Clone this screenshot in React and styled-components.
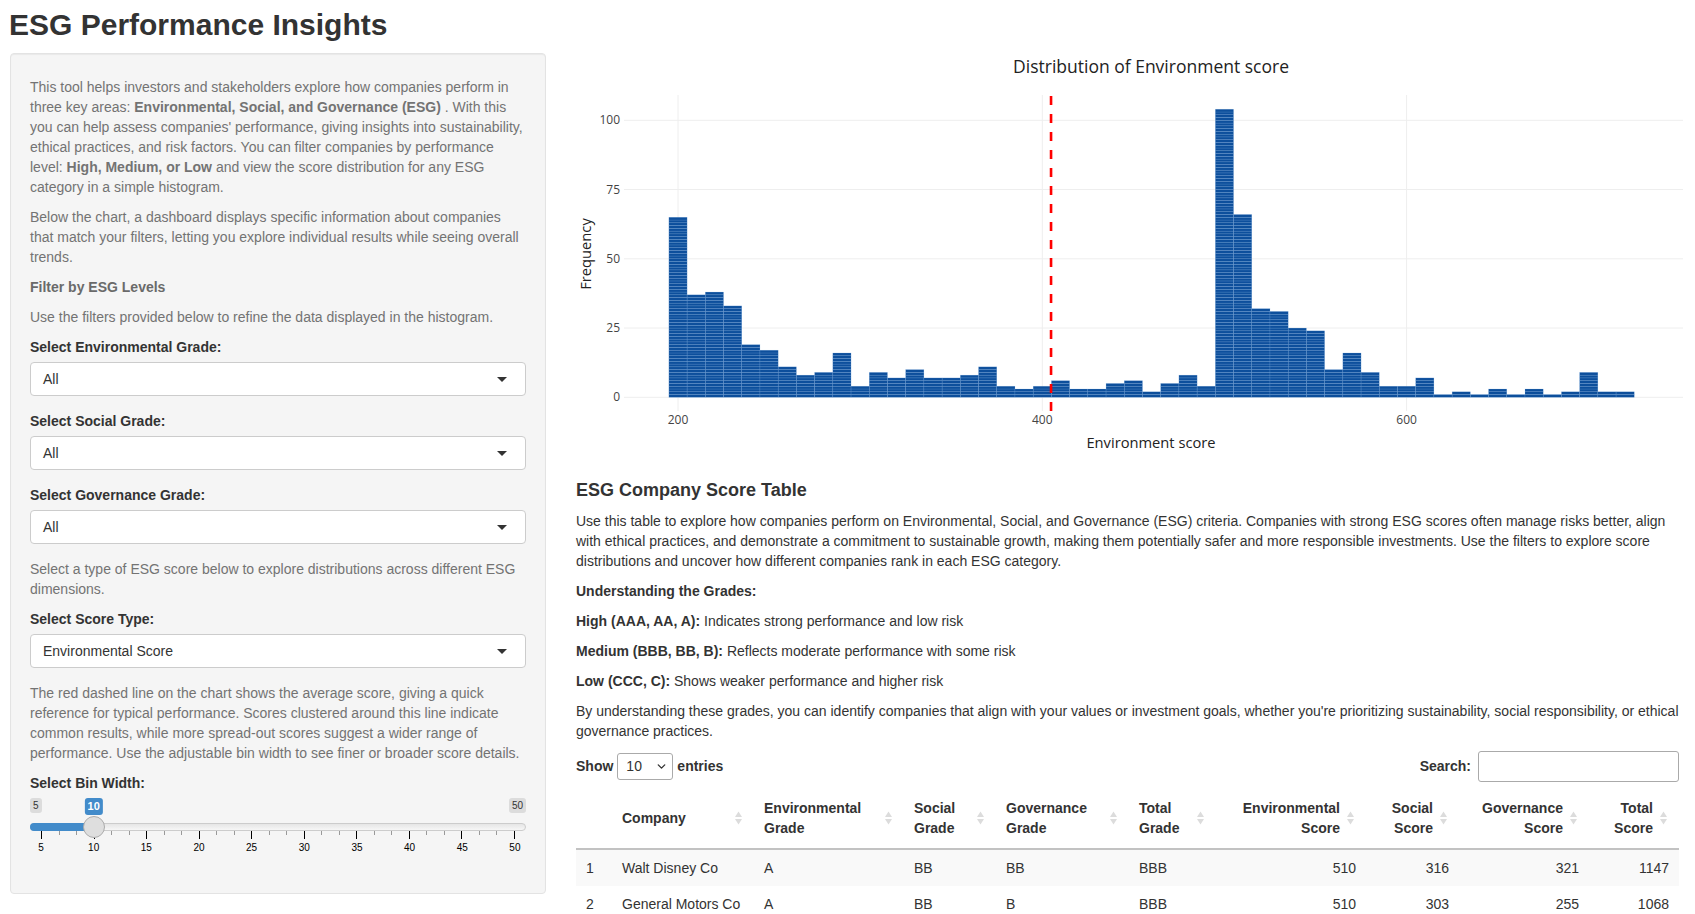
import React from 'react'
import styled, { createGlobalStyle } from 'styled-components'
import { ChevronDown } from 'lucide-react'

const GlobalStyle = createGlobalStyle`
  * { box-sizing: border-box; }
  html, body { margin: 0; background: #fff; overflow: hidden; }
  body {
    font-family: "Liberation Sans", Arial, Helvetica, sans-serif;
    font-size: 14px;
    line-height: 20px;
    color: #333;
  }
`

// histogram counts, bins of width 10 starting at 195
const counts = [65, 37, 38, 33, 19, 17, 11, 8, 9, 16, 4, 9, 7, 10, 7, 7, 8, 11, 4, 3, 4, 6, 3, 3, 5, 6, 2, 5, 8, 4,
  104, 66, 32, 31, 25, 24, 10, 16, 9, 4, 4, 7, 1, 2, 1, 3, 1, 3, 1, 2, 9, 2, 2]
const BIN_START = 195
const BIN_W = 10
const AVG = 404.8

const X0 = 102
const XS = 1.8215
const Y0 = 344.3
const YS = 2.77
const xPos = v => X0 + (v - 200) * XS
const yPos = c => Y0 - c * YS

const rows = [
  [1, 'Walt Disney Co', 'A', 'BB', 'BB', 'BBB', 510, 316, 321, 1147],
  [2, 'General Motors Co', 'A', 'BB', 'B', 'BBB', 510, 303, 255, 1068],
]

const columns = [
  { label: '', w: 36 },
  { label: 'Company', w: 142 },
  { label: ['Environmental', 'Grade'], w: 150 },
  { label: ['Social', 'Grade'], w: 92 },
  { label: ['Governance', 'Grade'], w: 133 },
  { label: ['Total', 'Grade'], w: 87 },
  { label: ['Environmental', 'Score'], w: 150, num: true },
  { label: ['Social', 'Score'], w: 93, num: true },
  { label: ['Governance', 'Score'], w: 130, num: true },
  { label: ['Total', 'Score'], w: 90, num: true },
]

const Page = styled.div`
  padding-top: 8px;
`

const Title = styled.h2`
  margin: 0 0 12px 9px;
  font-size: 30px;
  line-height: 33px;
  font-weight: bold;
  color: #333;
`

const Layout = styled.div`
  display: grid;
  grid-template-columns: 536px 1103px;
  column-gap: 30px;
  padding-left: 10px;
  align-items: start;
`

const Well = styled.div`
  background: #f5f5f5;
  border: 1px solid #e3e3e3;
  border-radius: 4px;
  box-shadow: inset 0 1px 1px rgba(0, 0, 0, 0.05);
  padding: 23px 19px 19px;
`

const Muted = styled.p`
  margin: 0 0 10px;
  color: #737373;
  strong { font-weight: bold; }
`

const SubHead = styled(Muted)`
  font-weight: bold;
  color: #6a6a6a;
`

const FormGroup = styled.div`
  margin-bottom: 15px;
`

const Label = styled.label`
  display: block;
  font-weight: bold;
  margin-bottom: 5px;
  color: #333;
`

const SelectBox = styled.div`
  height: 34px;
  background: #fff;
  border: 1px solid #ccc;
  border-radius: 4px;
  padding: 6px 12px;
  display: flex;
  align-items: center;
  justify-content: space-between;
  color: #333;
  &::after {
    content: "";
    margin-right: 6px;
    border-style: solid;
    border-width: 5px 5px 0 5px;
    border-color: #333 transparent transparent transparent;
  }
`

const Slider = styled.div`
  height: 61px;
  position: relative;
`

const Badges = styled.div`
  height: 17px;
  display: flex;
  justify-content: space-between;
  align-items: flex-start;
  position: relative;
`

const Badge = styled.span`
  font-size: 10px;
  line-height: 13px;
  padding: 1px 3px;
  border-radius: 3px;
  background: rgba(0, 0, 0, 0.1);
  color: #333;
`

const SingleBadge = styled.span`
  position: absolute;
  top: 0;
  transform: translateX(-50%);
  font-size: 11px;
  line-height: 15px;
  padding: 1px 3px;
  border-radius: 3px;
  background: #428bca;
  color: #fff;
  font-weight: bold;
`

const Track = styled.div`
  margin-top: 8px;
  height: 8px;
  position: relative;
  border: 1px solid #ccc;
  border-radius: 8px;
  background: linear-gradient(to bottom, #ddd -50%, #fff 150%);
`

const Fill = styled.div`
  position: absolute;
  left: -1px;
  top: -1px;
  bottom: -1px;
  background: #428bca;
  border-radius: 8px 0 0 8px;
`

const Handle = styled.div`
  position: absolute;
  top: -8px;
  width: 22px;
  height: 22px;
  transform: translateX(-50%);
  border-radius: 50%;
  border: 1px solid #ababab;
  background: #dedede;
`

const Ticks = styled.div`
  margin: 0 11px;
  display: flex;
  justify-content: space-between;
  align-items: flex-start;
  height: 11px;
`

const Tick = styled.span`
  width: 1px;
  height: ${p => (p.$major ? 8 : 4)}px;
  background: ${p => (p.$major ? '#000' : '#999')};
`

const TickLabels = styled.div`
  margin: 0 11px;
  display: flex;
  justify-content: space-between;
`

const TickLabel = styled.span`
  width: 0;
  display: flex;
  justify-content: center;
  font-size: 10px;
  line-height: 12px;
  color: #000;
  white-space: nowrap;
`

const Main = styled.div`
  min-width: 0;
`

const Chart = styled.svg`
  display: block;
  overflow: visible;
  font-family: "Open Sans", Verdana, Arial, sans-serif;
`

const TableTitle = styled.h4`
  margin: 10px 0;
  font-size: 18px;
  line-height: 19.8px;
  font-weight: bold;
  color: #333;
`

const Text = styled.p`
  margin: 0 0 10px;
  color: #333;
  strong { font-weight: bold; }
`

const Controls = styled.div`
  display: flex;
  justify-content: space-between;
  align-items: center;
  height: 31px;
  font-weight: bold;
`

const Inline = styled.label`
  display: flex;
  align-items: center;
  gap: 4px;
`

const LengthSelect = styled.div`
  width: 56px;
  height: 27px;
  border: 1px solid #aaa;
  border-radius: 3px;
  background: #fff;
  display: flex;
  align-items: center;
  justify-content: space-between;
  padding: 0 4px 0 8px;
  font-weight: normal;
  color: #333;
`

const SearchInput = styled.input`
  width: 201px;
  height: 31px;
  margin-left: 3px;
  border: 1px solid #aaa;
  border-radius: 3px;
  padding: 5px;
  font: inherit;
`

const Table = styled.table`
  width: 100%;
  margin-top: 6px;
  border-collapse: collapse;
  table-layout: fixed;
`

const Th = styled.th`
  position: relative;
  padding: 10px 26px 10px 10px;
  text-align: ${p => (p.$num ? 'right' : 'left')};
  vertical-align: middle;
  font-weight: bold;
  border-bottom: 2px solid #c2c2c2;
`

const SortIcon = styled.svg`
  position: absolute;
  right: 12px;
  top: 50%;
  transform: translateY(-50%);
`

const Tr = styled.tr`
  background: ${p => (p.$odd ? '#f9f9f9' : '#fff')};
  & + & td { border-top: 1px solid #ddd; }
`

const Td = styled.td`
  padding: 8px 10px;
  text-align: ${p => (p.$num ? 'right' : 'left')};
  white-space: nowrap;
  overflow: hidden;
`

function Select({ value }) {
  return <SelectBox>{value}</SelectBox>
}

function BinSlider({ min, max, value }) {
  const pct = (value - min) / (max - min)
  const handleX = `calc(11px + (100% - 22px) * ${pct})`
  const ticks = []
  const steps = ((max - min) / 5) * 3
  for (let i = 0; i <= steps; i++) ticks.push(<Tick key={i} $major={i % 3 === 0} />)
  const labels = []
  for (let v = min; v <= max; v += 5) labels.push(<TickLabel key={v}>{v}</TickLabel>)
  return (
    <Slider>
      <Badges>
        <Badge>{min}</Badge>
        <SingleBadge style={{ left: handleX }}>{value}</SingleBadge>
        <Badge>{max}</Badge>
      </Badges>
      <Track>
        <Fill style={{ width: `calc(12px + (100% - 22px) * ${pct})` }} />
        <Handle style={{ left: handleX }} />
      </Track>
      <Ticks>{ticks}</Ticks>
      <TickLabels>{labels}</TickLabels>
    </Slider>
  )
}

function Histogram() {
  const bw = BIN_W * XS
  const rects = []
  counts.forEach((c, i) => {
    const x = xPos(BIN_START + i * BIN_W)
    for (let k = 0; k < c; k++) {
      rects.push(
        <rect key={i + '-' + k} x={x} y={yPos(k + 1)} width={bw} height={YS}
          fill="#0d4f9c" stroke="rgba(140,185,235,0.35)" strokeWidth="0.5" />
      )
    }
  })
  const yTicks = [0, 25, 50, 75, 100]
  const xTicks = [200, 400, 600]
  return (
    <Chart width="1110" height="418">
      <text x="575" y="20" textAnchor="middle" fontSize="17.5" fill="#222">Distribution of Environment score</text>
      {yTicks.map(t => (
        <g key={t}>
          <line x1="48" x2="1107" y1={yPos(t)} y2={yPos(t)} stroke="#eee" strokeWidth="1" />
          <text x="44" y={yPos(t) + 4} textAnchor="end" fontSize="12" fill="#444">{t}</text>
        </g>
      ))}
      {xTicks.map(t => (
        <g key={t}>
          <line x1={xPos(t)} x2={xPos(t)} y1="42" y2="358" stroke="#eee" strokeWidth="1" />
          <text x={xPos(t)} y="371" textAnchor="middle" fontSize="12" fill="#444">{t}</text>
        </g>
      ))}
      {rects}
      <line x1={xPos(AVG)} x2={xPos(AVG)} y1="43" y2="359" stroke="#ff0000" strokeWidth="2.6" strokeDasharray="9 9" />
      <text x="575" y="395" textAnchor="middle" fontSize="14.7" fill="#222">Environment score</text>
      <text transform="translate(15 201) rotate(-90)" textAnchor="middle" fontSize="14.7" fill="#222">Frequency</text>
    </Chart>
  )
}

function SortArrows() {
  return (
    <SortIcon width="7" height="15" viewBox="0 0 7 15">
      <path d="M0 6.5 L3.5 1 L7 6.5 Z" fill="#dcdcdc" />
      <path d="M0 8.5 L7 8.5 L3.5 14 Z" fill="#dcdcdc" />
    </SortIcon>
  )
}

export default function App() {
  return (
    <Page>
      <GlobalStyle />
      <Title>ESG Performance Insights</Title>
      <Layout>
        <Well>
          <Muted>
            This tool helps investors and stakeholders explore how companies perform in three key areas:{' '}
            <strong>Environmental, Social, and Governance (ESG)</strong> . With this you can help assess companies'
            performance, giving insights into sustainability, ethical practices, and risk factors. You can filter
            companies by performance level: <strong>High, Medium, or Low</strong> and view the score distribution for
            any ESG category in a simple histogram.
          </Muted>
          <Muted>
            Below the chart, a dashboard displays specific information about companies that match your filters,
            letting you explore individual results while seeing overall trends.
          </Muted>
          <SubHead>Filter by ESG Levels</SubHead>
          <Muted>Use the filters provided below to refine the data displayed in the histogram.</Muted>
          <FormGroup>
            <Label>Select Environmental Grade:</Label>
            <Select value="All" />
          </FormGroup>
          <FormGroup>
            <Label>Select Social Grade:</Label>
            <Select value="All" />
          </FormGroup>
          <FormGroup>
            <Label>Select Governance Grade:</Label>
            <Select value="All" />
          </FormGroup>
          <Muted>Select a type of ESG score below to explore distributions across different ESG dimensions.</Muted>
          <FormGroup>
            <Label>Select Score Type:</Label>
            <Select value="Environmental Score" />
          </FormGroup>
          <Muted>
            The red dashed line on the chart shows the average score, giving a quick reference for typical
            performance. Scores clustered around this line indicate common results, while more spread-out scores
            suggest a wider range of performance. Use the adjustable bin width to see finer or broader score details.
          </Muted>
          <FormGroup>
            <Label>Select Bin Width:</Label>
            <BinSlider min={5} max={50} value={10} />
          </FormGroup>
        </Well>

        <Main>
          <Histogram />
          <TableTitle>ESG Company Score Table</TableTitle>
          <Text>
            Use this table to explore how companies perform on Environmental, Social, and Governance (ESG) criteria.
            Companies with strong ESG scores often manage risks better, align with ethical practices, and demonstrate a
            commitment to sustainable growth, making them potentially safer and more responsible investments. Use the
            filters to explore score distributions and uncover how different companies rank in each ESG category.
          </Text>
          <Text><strong>Understanding the Grades:</strong></Text>
          <Text><strong>High (AAA, AA, A):</strong> Indicates strong performance and low risk</Text>
          <Text><strong>Medium (BBB, BB, B):</strong> Reflects moderate performance with some risk</Text>
          <Text><strong>Low (CCC, C):</strong> Shows weaker performance and higher risk</Text>
          <Text>
            By understanding these grades, you can identify companies that align with your values or investment goals,
            whether you're prioritizing sustainability, social responsibility, or ethical governance practices.
          </Text>

          <Controls>
            <Inline>
              Show
              <LengthSelect>10 <ChevronDown size={13} strokeWidth={2.5} color="#333" /></LengthSelect>
              entries
            </Inline>
            <Inline>
              Search:<SearchInput type="search" />
            </Inline>
          </Controls>

          <Table>
            <colgroup>
              {columns.map((c, i) => <col key={i} style={{ width: c.w }} />)}
            </colgroup>
            <thead>
              <tr>
                {columns.map((c, i) => (
                  <Th key={i} $num={c.num}>
                    {Array.isArray(c.label) ? <>{c.label[0]}<br />{c.label[1]}</> : c.label}
                    {i > 0 && <SortArrows />}
                  </Th>
                ))}
              </tr>
            </thead>
            <tbody>
              {rows.map((r, ri) => (
                <Tr key={ri} $odd={ri % 2 === 0}>
                  {r.map((cell, ci) => (
                    <Td key={ci} $num={columns[ci].num}>{cell}</Td>
                  ))}
                </Tr>
              ))}
            </tbody>
          </Table>
        </Main>
      </Layout>
    </Page>
  )
}
